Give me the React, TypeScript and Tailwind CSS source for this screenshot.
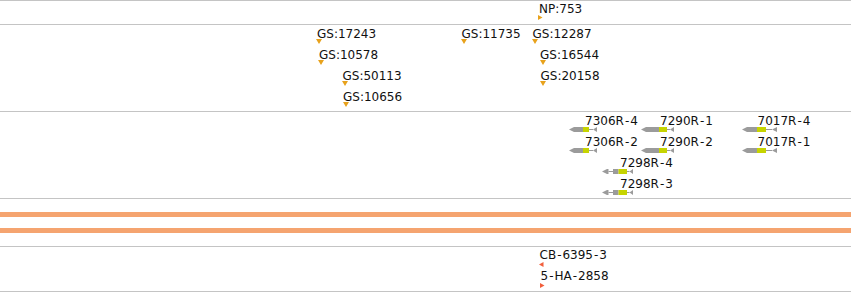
import React from 'react';

type Label = { text: string; x: number; row: number; mx: number };
type Part = { kind: 'arrow' | 'utr' | 'cds' | 'line' | 'tip'; from: number; to: number };
type Gene = { text: string; x: number; row: number; gx: number; parts: Part[] };

const GOLD = '#e8a21c';
const RED = '#f25f3c';
const GRAY = '#9b9b9b';
const CDS = '#c6d400';

const gs: Label[] = [
  { text: 'GS:17243', x: 317, row: 0, mx: 316 },
  { text: 'GS:10578', x: 319, row: 1, mx: 318 },
  { text: 'GS:50113', x: 342.5, row: 2, mx: 342 },
  { text: 'GS:10656', x: 343, row: 3, mx: 342.5 },
  { text: 'GS:11735', x: 461.5, row: 0, mx: 461 },
  { text: 'GS:12287', x: 532.5, row: 0, mx: 532 },
  { text: 'GS:16544', x: 540, row: 1, mx: 540 },
  { text: 'GS:20158', x: 540.5, row: 2, mx: 540 },
];

const shortGene: Part[] = [
  { kind: 'arrow', from: 0, to: 14 },
  { kind: 'cds', from: 14, to: 20 },
  { kind: 'line', from: 20, to: 24 },
  { kind: 'tip', from: 24, to: 28 },
];
const midGene: Part[] = [
  { kind: 'arrow', from: 0, to: 18 },
  { kind: 'cds', from: 18, to: 26 },
  { kind: 'line', from: 26, to: 29 },
  { kind: 'tip', from: 29, to: 33 },
];
const longGene: Part[] = [
  { kind: 'arrow', from: 0, to: 15 },
  { kind: 'cds', from: 15, to: 24 },
  { kind: 'line', from: 24, to: 30 },
  { kind: 'tip', from: 30, to: 35 },
];
const splitGene: Part[] = [
  { kind: 'arrow', from: 0, to: 6.5 },
  { kind: 'line', from: 6.5, to: 11 },
  { kind: 'utr', from: 11, to: 16.5 },
  { kind: 'cds', from: 16.5, to: 25 },
  { kind: 'line', from: 25, to: 27.5 },
  { kind: 'tip', from: 27.5, to: 31 },
];

const genes: Gene[] = [
  { text: '7306R-4', x: 585, row: 0, gx: 569, parts: shortGene },
  { text: '7290R-1', x: 660, row: 0, gx: 641, parts: midGene },
  { text: '7017R-4', x: 757.5, row: 0, gx: 742, parts: longGene },
  { text: '7306R-2', x: 585, row: 1, gx: 569, parts: shortGene },
  { text: '7290R-2', x: 660, row: 1, gx: 641, parts: midGene },
  { text: '7017R-1', x: 757.5, row: 1, gx: 742, parts: longGene },
  { text: '7298R-4', x: 620, row: 2, gx: 602, parts: splitGene },
  { text: '7298R-3', x: 620, row: 3, gx: 602, parts: splitGene },
];

const rowsOf = <T extends { row: number }>(items: T[]) => {
  const n = Math.max(...items.map((i) => i.row)) + 1;
  return Array.from({ length: n }, (_, r) => items.filter((i) => i.row === r));
};

function Marker({ dir, color }: { dir: 'down' | 'left' | 'right'; color: string }) {
  const pts = dir === 'down' ? '0,0 6,0 3,5' : dir === 'left' ? '0,2.5 4.5,0 4.5,5' : '0,0 4.5,2.5 0,5';
  return (
    <svg width={6} height={5} className="block shrink-0">
      <polygon points={pts} fill={color} />
    </svg>
  );
}

function GeneGlyph({ parts }: { parts: Part[] }) {
  const w = parts[parts.length - 1].to;
  return (
    <svg width={w} height={5} className="block shrink-0">
      {parts.map((p, i) => {
        if (p.kind === 'arrow')
          return <polygon key={i} points={`${p.from},2.5 ${p.from + 5},0 ${p.to},0 ${p.to},5 ${p.from + 5},5`} fill={GRAY} />;
        if (p.kind === 'utr') return <rect key={i} x={p.from} y={0} width={p.to - p.from} height={5} fill={GRAY} />;
        if (p.kind === 'cds') return <rect key={i} x={p.from} y={0} width={p.to - p.from} height={5} fill={CDS} />;
        if (p.kind === 'line') return <rect key={i} x={p.from} y={2} width={p.to - p.from} height={1} fill={GRAY} />;
        return <polygon key={i} points={`${p.from},2.5 ${p.to},0 ${p.to},5`} fill={GRAY} />;
      })}
    </svg>
  );
}

// hyphens in the track font are drawn wider than DejaVu's, pad them a little
function LabelText({ text }: { text: string }) {
  const bits = text.split('-');
  return (
    <>
      {bits.map((b, i) => (
        <React.Fragment key={i}>
          {i > 0 && <span className="px-px">-</span>}
          {b}
        </React.Fragment>
      ))}
    </>
  );
}

// a feature sits at its genomic coordinate inside a row: label on top, glyph under it
function Feature({ left, labelOffset, text, children, glyphClass }: {
  left: number; labelOffset: number; text: string; children: React.ReactNode; glyphClass: string;
}) {
  return (
    <div className="absolute top-0 flex flex-col items-start" style={{ left }}>
      <span
        className="whitespace-nowrap text-[12px] leading-[14px] text-[#111] font-['DejaVu_Sans',sans-serif]"
        style={{ marginLeft: labelOffset }}
      >
        <LabelText text={text} />
      </span>
      <div className={glyphClass}>{children}</div>
    </div>
  );
}

export default function App() {
  return (
    <div className="w-[851px] h-[292px] bg-white flex flex-col border-t border-[#c4c4c4] overflow-hidden">
      {/* NP track */}
      <div className="relative h-[24px] border-b border-[#c4c4c4] shrink-0 pt-px">
        <div className="relative h-[21px]">
          <Feature left={538} labelOffset={1} text="NP:753" glyphClass="-mt-px">
            <Marker dir="right" color={GOLD} />
          </Feature>
        </div>
      </div>

      {/* GS track */}
      <div className="h-[87px] border-b border-[#c4c4c4] shrink-0 pt-[2px] flex flex-col">
        {rowsOf(gs).map((row, r) => (
          <div key={r} className="relative h-[21px] shrink-0">
            {row.map((l) => (
              <Feature key={l.text} left={l.mx} labelOffset={l.x - l.mx} text={l.text} glyphClass="-mt-[2px]">
                <Marker dir="down" color={GOLD} />
              </Feature>
            ))}
          </div>
        ))}
      </div>

      {/* gene models */}
      <div className="h-[87px] border-b border-[#c4c4c4] shrink-0 pt-[2px] flex flex-col">
        {rowsOf(genes).map((row, r) => (
          <div key={r} className="relative h-[21px] shrink-0">
            {row.map((g) => (
              <Feature key={g.text} left={g.gx} labelOffset={g.x - g.gx} text={g.text} glyphClass="-mt-px">
                <GeneGlyph parts={g.parts} />
              </Feature>
            ))}
          </div>
        ))}
      </div>

      {/* coverage bars */}
      <div className="h-[48px] border-b border-[#c4c4c4] shrink-0 flex flex-col pt-[13px] gap-[11px]">
        <div className="h-[5px] w-full bg-[#f5a470]" />
        <div className="h-[5px] w-full bg-[#f5a470]" />
      </div>

      {/* strains */}
      <div className="h-[45px] border-b border-[#c4c4c4] shrink-0 pt-px flex flex-col">
        <div className="relative h-[21px] shrink-0">
          <Feature left={539} labelOffset={0.5} text="CB-6395-3" glyphClass="">
            <Marker dir="left" color={RED} />
          </Feature>
        </div>
        <div className="relative h-[21px] shrink-0">
          <Feature left={540} labelOffset={0.5} text="5-HA-2858" glyphClass="">
            <Marker dir="right" color={RED} />
          </Feature>
        </div>
      </div>
    </div>
  );
}
